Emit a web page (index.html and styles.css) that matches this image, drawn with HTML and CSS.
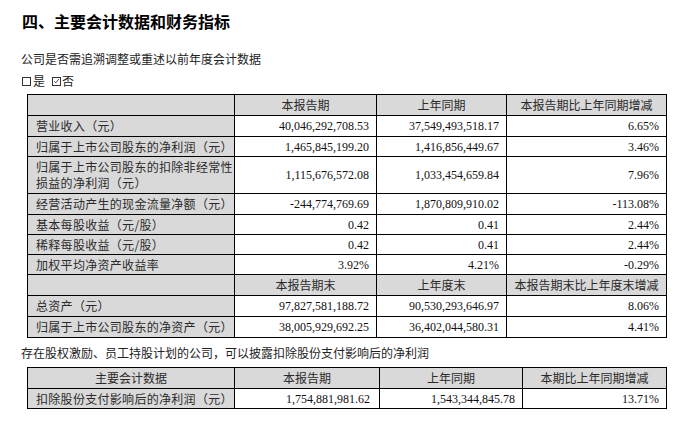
FILE: index.html
```html
<!DOCTYPE html>
<html lang="zh-CN">
<head>
<meta charset="utf-8">
<title>主要会计数据和财务指标</title>
<link rel="stylesheet" href="styles.css">
</head>
<body>
<div class="page">
  <h1 class="title">四、主要会计数据和财务指标</h1>
  <p class="line sub">公司是否需追溯调整或重述以前年度会计数据</p>
  <p class="line choice"><span class="box"></span>是 <span class="box checked"><svg viewBox="0 0 8 8" width="8" height="8"><path d="M1.3 4.2 L3.2 6.1 L6.8 1.6" fill="none" stroke="#222" stroke-width="0.9"/></svg></span>否</p>

  <div class="grid t1">
    <div class="c h"></div>
    <div class="c h">本报告期</div>
    <div class="c h">上年同期</div>
    <div class="c h">本报告期比上年同期增减</div>

    <div class="c l">营业收入（元）</div>
    <div class="c n">40,046,292,708.53</div>
    <div class="c n">37,549,493,518.17</div>
    <div class="c n">6.65%</div>

    <div class="c l">归属于上市公司股东的净利润（元）</div>
    <div class="c n">1,465,845,199.20</div>
    <div class="c n">1,416,856,449.67</div>
    <div class="c n">3.46%</div>

    <div class="c l">归属于上市公司股东的扣除非经常性<br>损益的净利润（元）</div>
    <div class="c n">1,115,676,572.08</div>
    <div class="c n">1,033,454,659.84</div>
    <div class="c n">7.96%</div>

    <div class="c l">经营活动产生的现金流量净额（元）</div>
    <div class="c n">-244,774,769.69</div>
    <div class="c n">1,870,809,910.02</div>
    <div class="c n">-113.08%</div>

    <div class="c l">基本每股收益（元/股）</div>
    <div class="c n">0.42</div>
    <div class="c n">0.41</div>
    <div class="c n">2.44%</div>

    <div class="c l">稀释每股收益（元/股）</div>
    <div class="c n">0.42</div>
    <div class="c n">0.41</div>
    <div class="c n">2.44%</div>

    <div class="c l">加权平均净资产收益率</div>
    <div class="c n">3.92%</div>
    <div class="c n">4.21%</div>
    <div class="c n">-0.29%</div>

    <div class="c h"></div>
    <div class="c h">本报告期末</div>
    <div class="c h">上年度末</div>
    <div class="c h">本报告期末比上年度末增减</div>

    <div class="c l">总资产（元）</div>
    <div class="c n">97,827,581,188.72</div>
    <div class="c n">90,530,293,646.97</div>
    <div class="c n">8.06%</div>

    <div class="c l">归属于上市公司股东的净资产（元）</div>
    <div class="c n">38,005,929,692.25</div>
    <div class="c n">36,402,044,580.31</div>
    <div class="c n">4.41%</div>
  </div>

  <p class="line note">存在股权激励、员工持股计划的公司，可以披露扣除股份支付影响后的净利润</p>

  <div class="grid t2">
    <div class="c h">主要会计数据</div>
    <div class="c h">本报告期</div>
    <div class="c h">上年同期</div>
    <div class="c h">本期比上年同期增减</div>

    <div class="c l">扣除股份支付影响后的净利润（元）</div>
    <div class="c n n2">1,754,881,981.62</div>
    <div class="c n">1,543,344,845.78</div>
    <div class="c n">13.71%</div>
  </div>
</div>
</body>
</html>
```
FILE: styles.css
```css
html, body {
  margin: 0;
  padding: 0;
  background: #ffffff;
}

body {
  font-family: "Liberation Serif", "Noto Sans CJK SC", serif;
  color: #1c1c1c;
  font-size: 12px;
}

.page {
  padding: 11px 0 0 21px;
  width: 650px;
}

.title {
  margin: 0 0 0 1px;
  font-family: "Noto Sans CJK SC", sans-serif;
  font-size: 16px;
  font-weight: 700;
  line-height: 20px;
  color: #000;
}

.line {
  margin: 0;
  font-family: "Noto Sans CJK SC", sans-serif;
  font-size: 12px;
  line-height: 18px;
  color: #222;
}

.sub {
  margin-top: 19px;
}

.choice {
  margin-top: 4px;
  display: flex;
  align-items: center;
  padding-left: 1px;
}

.box {
  display: inline-flex;
  width: 7px;
  height: 7px;
  border: 1px solid #333;
  margin-right: 2px;
  align-items: center;
  justify-content: center;
}

.box.checked {
  margin-left: 7px;
  margin-right: 1px;
}

.box svg {
  display: block;
}

.grid {
  display: grid;
  margin-left: 6px;
  border-top: 1px solid #000;
  border-left: 1px solid #000;
  width: max-content;
}

.t1 {
  margin-top: 4px;
  grid-template-columns: 207px 142px 130px 160px;
  grid-template-rows: 21px 21px 20px 37px 21px 20px 20px 20px 21px 21px 21px;
}

.t2 {
  margin-top: 5px;
  grid-template-columns: 207px 145px 143px 144px;
  grid-template-rows: 21px 20px;
}

.c {
  border-right: 1px solid #000;
  border-bottom: 1px solid #000;
  display: flex;
  align-items: center;
  padding: 0 7px 0 8px;
  line-height: 16px;
  white-space: nowrap;
}

.h {
  background: #d9d9d9;
  justify-content: center;
  font-family: "Noto Sans CJK SC", sans-serif;
  color: #2a2a2a;
  padding: 0 4px;
}

.l {
  background: #d9d9d9;
  font-family: "Noto Sans CJK SC", sans-serif;
  color: #2a2a2a;
  letter-spacing: 0.3px;
}

.n {
  justify-content: flex-end;
  font-family: "Liberation Serif", serif;
  color: #111;
}

.n2 {
  padding-right: 9px;
}

.note {
  margin-top: 6px;
}
```
